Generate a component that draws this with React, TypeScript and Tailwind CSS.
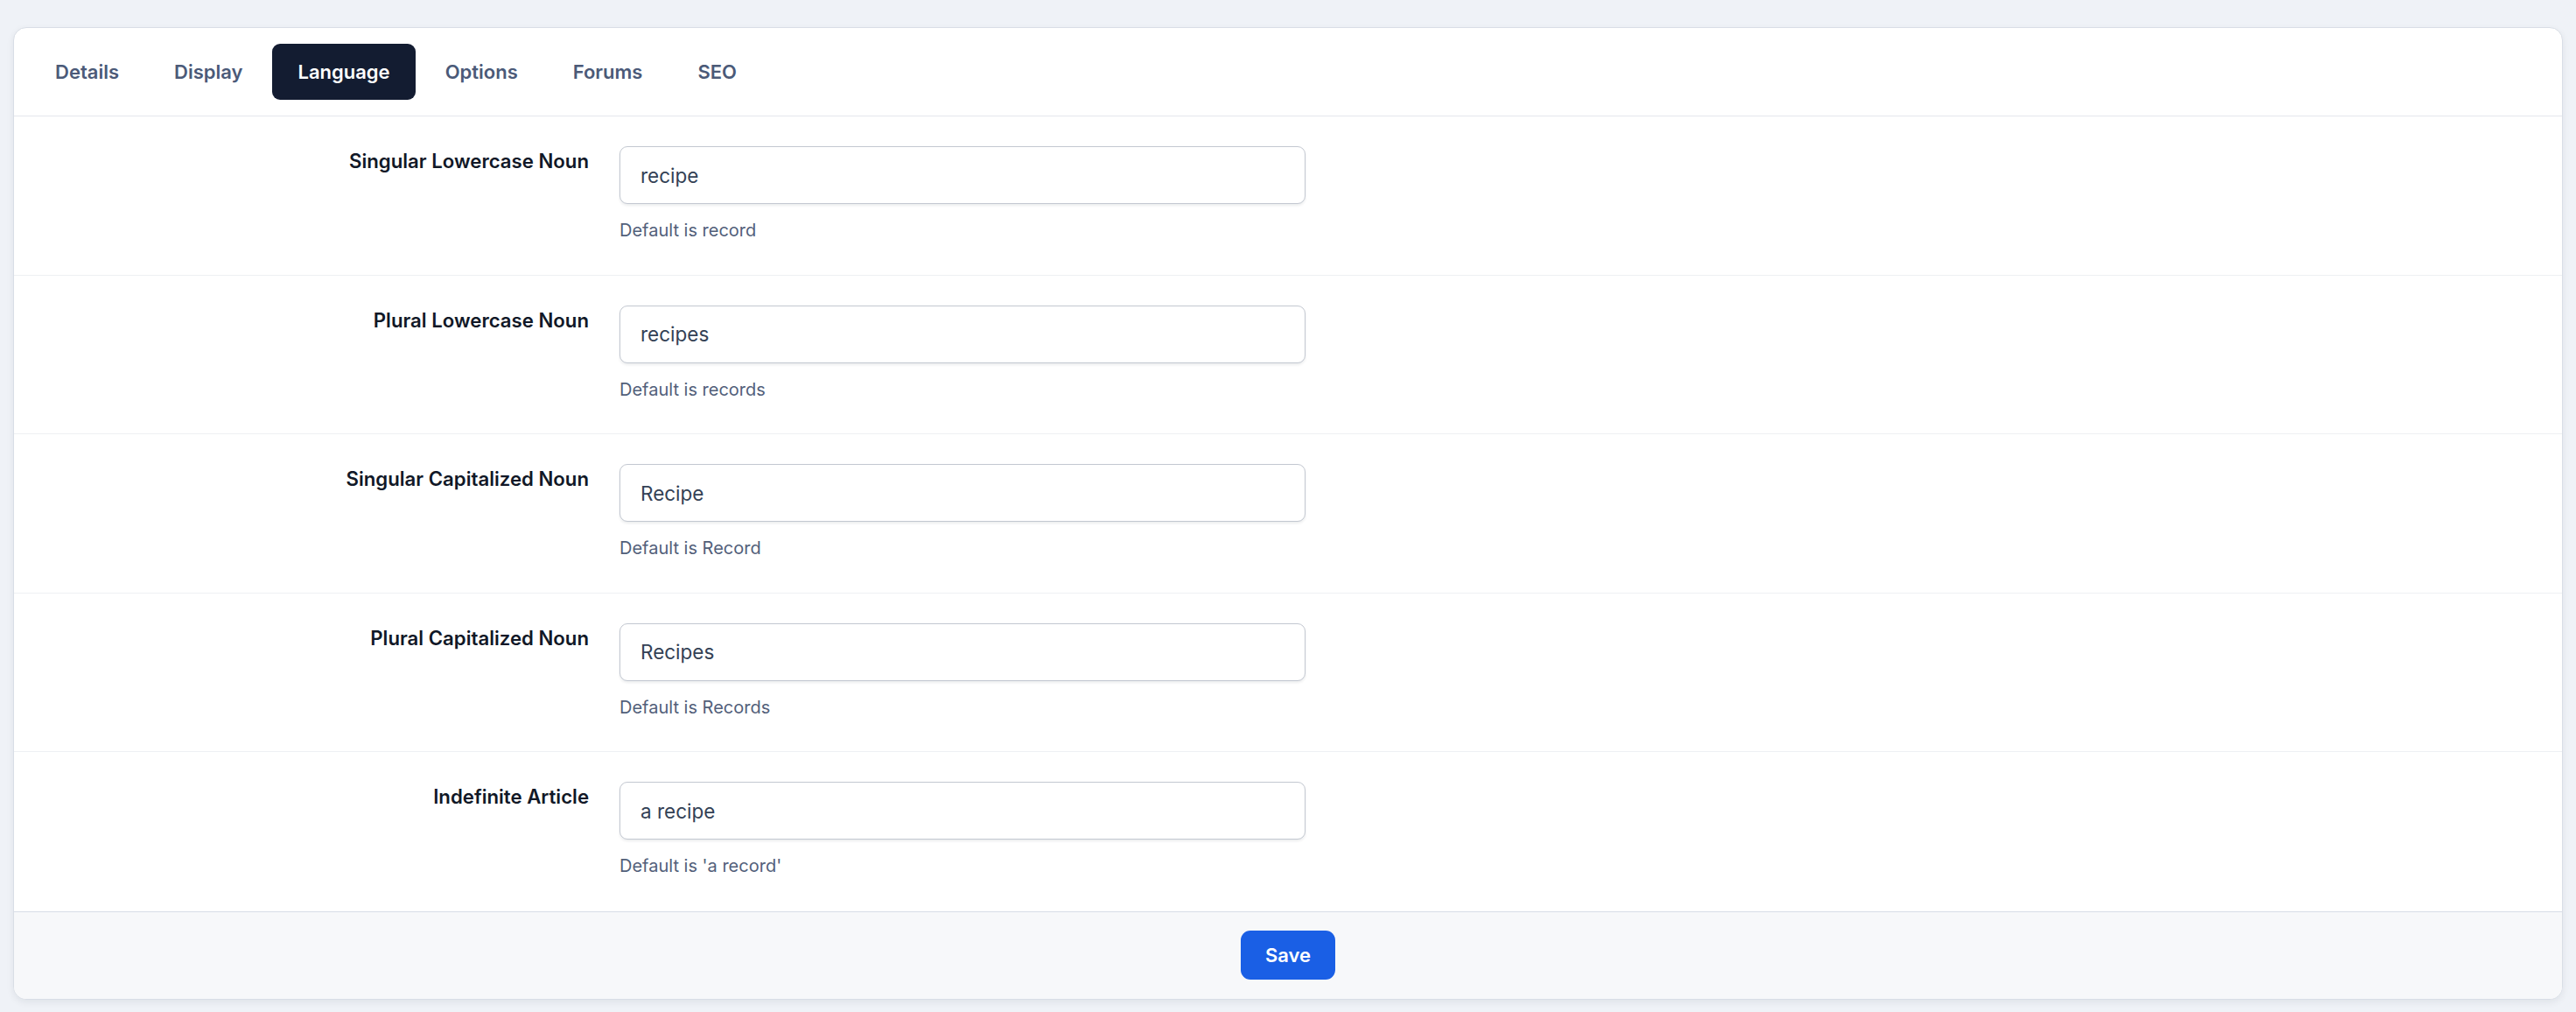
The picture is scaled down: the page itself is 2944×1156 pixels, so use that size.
import { useState } from 'react'

const tabs = ['Details', 'Display', 'Language', 'Options', 'Forums', 'SEO']

const fields = [
  { id: 'singular', label: 'Singular Lowercase Noun', value: 'recipe', help: 'Default is record' },
  { id: 'plural', label: 'Plural Lowercase Noun', value: 'recipes', help: 'Default is records' },
  { id: 'singular-cap', label: 'Singular Capitalized Noun', value: 'Recipe', help: 'Default is Record' },
  { id: 'plural-cap', label: 'Plural Capitalized Noun', value: 'Recipes', help: 'Default is Records' },
  { id: 'article', label: 'Indefinite Article', value: 'a recipe', help: "Default is 'a record'" },
]

function FieldRow({
  id,
  label,
  value,
  help,
  onChange,
}: {
  id: string
  label: string
  value: string
  help: string
  onChange: (v: string) => void
}) {
  return (
    <div className="flex items-start pt-[34px] h-[181.5px]">
      <label
        htmlFor={id}
        className="w-[657px] shrink-0 pt-[1px] text-right text-[22.2px] leading-[32px] font-semibold text-[#111827]"
      >
        {label}
      </label>
      <div className="ml-[35px] flex flex-col">
        <input
          id={id}
          value={value}
          onChange={(e) => onChange(e.target.value)}
          className="w-[784px] h-[66px] rounded-[9px] border border-[#c3c8d1] bg-white px-[23px] text-[22.5px] leading-[32px] text-[#334155] shadow-[0_2px_3px_rgba(15,23,42,0.08)] outline-none"
        />
        <p className="mt-[17px] text-[20px] leading-[26px] text-[#52607a]">{help}</p>
      </div>
    </div>
  )
}

export default function App() {
  const [active, setActive] = useState('Language')
  const [values, setValues] = useState<Record<string, string>>(
    Object.fromEntries(fields.map((f) => [f.id, f.value])),
  )

  return (
    <div className="min-h-screen bg-[#eff2f7] px-[15px] pt-[31px] pb-[18px] font-['Inter','Noto_Sans',sans-serif]">
      <div className="overflow-hidden rounded-[15px] border border-[#d9dee6] bg-white shadow-[0_3px_8px_rgba(15,23,42,0.07)]">
        <div className="flex gap-[5px] border-b border-[#e4e7ec] px-[18px] py-[18px]">
          {tabs.map((t) => (
            <button
              key={t}
              onClick={() => setActive(t)}
              className={
                t === active
                  ? 'h-[64px] rounded-[9px] bg-[#131c31] px-[29px] text-[22px] font-semibold text-white'
                  : 'h-[64px] rounded-[9px] px-[29px] text-[22px] font-semibold text-[#4b5a78]'
              }
            >
              {t}
            </button>
          ))}
        </div>

        <div className="divide-y divide-[#eef0f3]">
          {fields.map((f) => (
            <FieldRow
              key={f.id}
              id={f.id}
              label={f.label}
              value={values[f.id]}
              help={f.help}
              onChange={(v) => setValues((prev) => ({ ...prev, [f.id]: v }))}
            />
          ))}
        </div>

        <div className="flex h-[100px] items-center justify-center border-t border-[#d8dde6] bg-[#f7f8fa]">
          <button className="h-[56px] w-[108px] rounded-[11px] bg-[#1a5fe5] text-[22px] font-semibold text-white">
            Save
          </button>
        </div>
      </div>
    </div>
  )
}
